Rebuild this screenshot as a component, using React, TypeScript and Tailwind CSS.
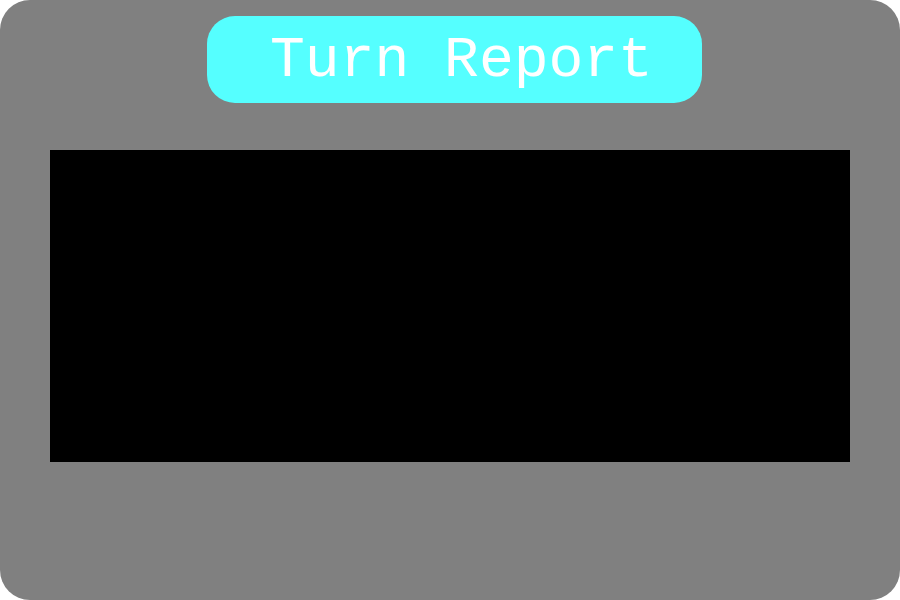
export default function App() {
  return (
    <div className="w-[900px] h-[600px] bg-white">
      <div className="w-full h-full rounded-[30px] bg-[#808080] flex flex-col items-center pt-[16px]">
        {/* Title pill */}
        <div className="ml-[9px] w-[495px] h-[87px] rounded-[28px] bg-[#55ffff] flex items-center justify-center pl-[14px] pt-[2px]">
          <h1 className="text-white text-[58px] leading-none font-['Liberation_Mono',monospace]">
            Turn Report
          </h1>
        </div>

        {/* Report area */}
        <div className="mt-[47px] w-[800px] h-[312px] bg-black" />
      </div>
    </div>
  );
}
